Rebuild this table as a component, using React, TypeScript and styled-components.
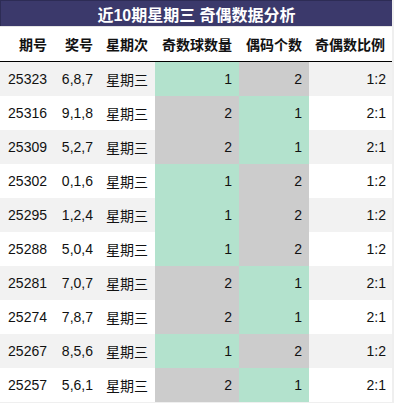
import React from "react";
import styled, { createGlobalStyle } from "styled-components";

const GlobalStyle = createGlobalStyle`
  html, body {
    margin: 0;
    padding: 0;
    background: #efefef;
  }
  body {
    font-family: "Liberation Sans", "Noto Sans CJK SC", sans-serif;
  }
`;

const Wrapper = styled.div`
  width: 392px;
  background: #ffffff;
`;

const Title = styled.div`
  height: 26px;
  background: #3b396b;
  color: #ffffff;
  font-weight: bold;
  font-size: 16px;
  display: flex;
  align-items: center;
  justify-content: center;
  box-sizing: border-box;
  border-left: 1px solid #2d2c55;
  border-top: 1px solid #2d2c55;
`;

const Table = styled.table`
  width: 392px;
  border-collapse: collapse;
  table-layout: fixed;
  font-size: 14px;
  color: #111111;
`;

const HeadCell = styled.th`
  height: 35px;
  padding: 0 7px 0 0;
  text-align: right;
  font-weight: bold;
  font-size: 14px;
  color: #111111;
  border-bottom: 1px solid #000000;
  border-top: 1px solid #e4e4e4;
  white-space: nowrap;
  box-sizing: border-box;
`;

const Row = styled.tr<{ $striped: boolean }>`
  height: 34px;
  background: ${(p) => (p.$striped ? "#f2f2f2" : "#ffffff")};
`;

const Cell = styled.td<{ $last?: boolean }>`
  padding: 0 ${(p) => (p.$last ? "6px" : "7px")} 0 0;
  text-align: right;
  white-space: nowrap;
`;

const ValueCell = styled.td<{ $value: number }>`
  padding: 0 7px 0 0;
  text-align: right;
  background: ${(p) => (p.$value === 1 ? "#b3e2cd" : "#cccccc")};
`;

const rows: [string, string, number, number][] = [
  ["25323", "6,8,7", 1, 2],
  ["25316", "9,1,8", 2, 1],
  ["25309", "5,2,7", 2, 1],
  ["25302", "0,1,6", 1, 2],
  ["25295", "1,2,4", 1, 2],
  ["25288", "5,0,4", 1, 2],
  ["25281", "7,0,7", 2, 1],
  ["25274", "7,8,7", 2, 1],
  ["25267", "8,5,6", 1, 2],
  ["25257", "5,6,1", 2, 1],
];

const widths = [54, 46, 55, 84, 70, 83];
const headers = ["期号", "奖号", "星期次", "奇数球数量", "偶码个数", "奇偶数比例"];

export default function App() {
  return (
    <>
      <GlobalStyle />
      <Wrapper>
        <Title>近10期星期三 奇偶数据分析</Title>
        <Table>
          <colgroup>
            {widths.map((w, i) => (
              <col key={i} style={{ width: w }} />
            ))}
          </colgroup>
          <thead>
            <tr>
              {headers.map((h) => (
                <HeadCell key={h}>{h}</HeadCell>
              ))}
            </tr>
          </thead>
          <tbody>
            {rows.map(([id, nums, odd, even], i) => (
              <Row key={id} $striped={i % 2 === 0}>
                <Cell>{id}</Cell>
                <Cell>{nums}</Cell>
                <Cell>星期三</Cell>
                <ValueCell $value={odd}>{odd}</ValueCell>
                <ValueCell $value={even}>{even}</ValueCell>
                <Cell $last>{`${odd}:${even}`}</Cell>
              </Row>
            ))}
          </tbody>
        </Table>
      </Wrapper>
    </>
  );
}
